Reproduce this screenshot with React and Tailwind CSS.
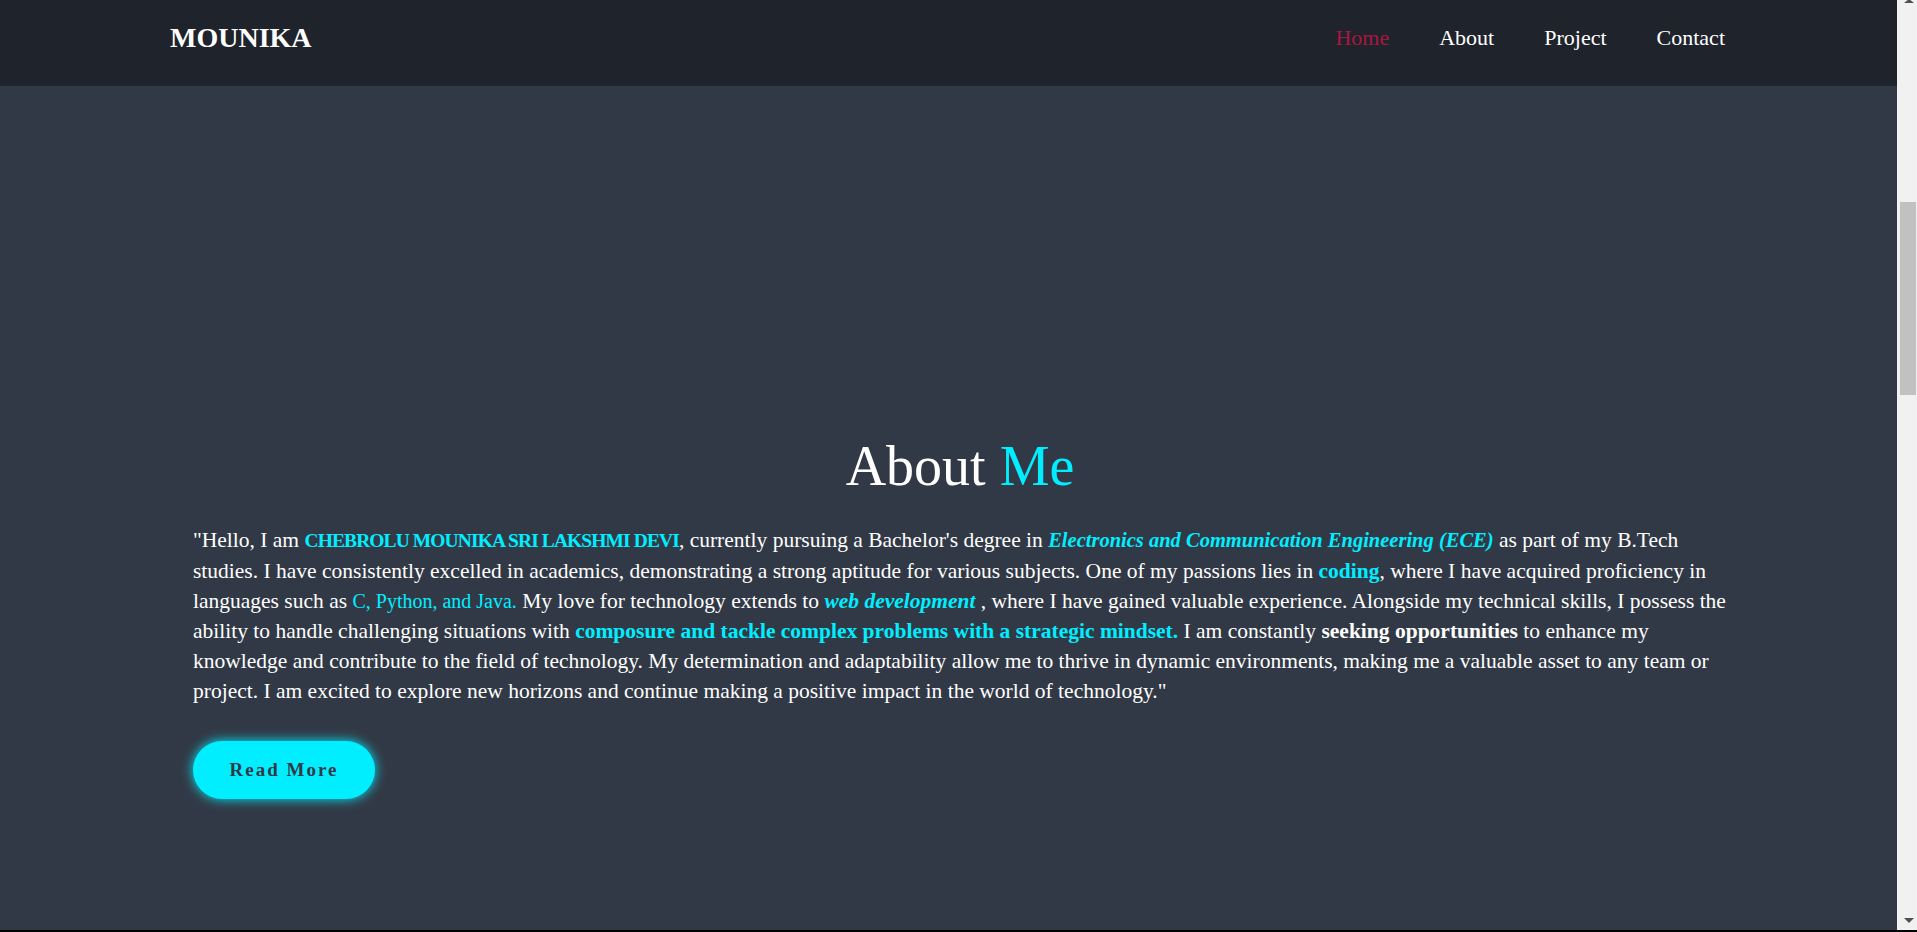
import React from 'react';

const serif = { fontFamily: '"Liberation Serif", serif' };

const NavLink = ({ label, active }) => (
  <a href="#" className={active ? 'text-[#a8173f]' : 'text-white'}>{label}</a>
);

const Header = () => (
  <header className="h-[86px] bg-[#1f232c] flex items-center justify-between pl-[170px] pr-[172px] pb-[11px]">
    <div className="text-[28px] font-bold text-white leading-none">MOUNIKA</div>
    <nav className="flex gap-[50px] text-[22px] leading-none">
      <NavLink label="Home" active />
      <NavLink label="About" />
      <NavLink label="Project" />
      <NavLink label="Contact" />
    </nav>
  </header>
);

const Hi = ({ children, className = '' }) => (
  <span className={'text-[#00eeff] ' + className}>{children}</span>
);

const About = () => (
  <section className="flex-1 bg-[#323946] pl-[193px] pr-[170px] pt-[352px]">
    <h2 className="text-center text-[56px] leading-none text-white">
      About <span className="text-[#00eeff]">Me</span>
    </h2>
    <p className="mt-[31px] mr-[-12px] text-[21.5px] leading-[30px] text-white">
      "Hello, I am <Hi className="font-bold text-[19.5px] tracking-[-0.9px]">CHEBROLU MOUNIKA SRI LAKSHMI DEVI</Hi>, currently pursuing a Bachelor's degree in{' '}
      <Hi className="font-bold italic text-[20.5px]">Electronics and Communication Engineering (ECE)</Hi> as part of my B.Tech studies. I have
      consistently excelled in academics, demonstrating a strong aptitude for various subjects. One of my passions lies in{' '}
      <Hi className="font-bold">coding</Hi>, where I have acquired proficiency in languages such as{' '}
      <Hi className="text-[20px]">C, Python, and Java.</Hi> My love for technology extends to{' '}
      <Hi className="font-bold italic">web development</Hi> , where I have gained valuable experience. Alongside my technical
      skills, I possess the ability to handle challenging situations with{' '}
      <Hi className="font-bold">composure and tackle complex problems with a strategic mindset.</Hi> I am constantly{' '}
      <span className="font-bold">seeking opportunities</span> to enhance my knowledge and contribute to the field of technology.
      My determination and adaptability allow me to thrive in dynamic environments, making me a valuable asset to any team or
      project. I am excited to explore new horizons and continue making a positive impact in the world of technology."
    </p>
    <button className="mt-[35px] w-[182px] h-[58px] rounded-full bg-[#00eeff] text-[#323946] text-[19px] font-bold tracking-[2px] shadow-[0_0_12px_#00eeff]">
      Read More
    </button>
  </section>
);

const Scrollbar = () => (
  <div className="w-[20px] bg-[#f1f1f1] flex flex-col items-center">
    <div className="h-0 w-0 border-l-[5px] border-r-[5px] border-b-[4px] border-l-transparent border-r-transparent border-b-[#505050] ml-[3px] -mt-[1px]" />
    <div className="mt-[199px] ml-[2px] w-[16px] h-[193px] bg-[#c1c1c1]" />
    <div className="flex-1" />
    <div className="mb-[7px] ml-[3px] h-0 w-0 border-l-[5px] border-r-[5px] border-t-[5px] border-l-transparent border-r-transparent border-t-[#505050]" />
  </div>
);

export default function App() {
  return (
    <div className="h-[932px] flex flex-col overflow-hidden" style={serif}>
      <div className="flex-1 flex">
        <div className="flex-1 flex flex-col">
          <Header />
          <About />
        </div>
        <Scrollbar />
      </div>
      <div className="h-[2px] bg-black" />
    </div>
  );
}
